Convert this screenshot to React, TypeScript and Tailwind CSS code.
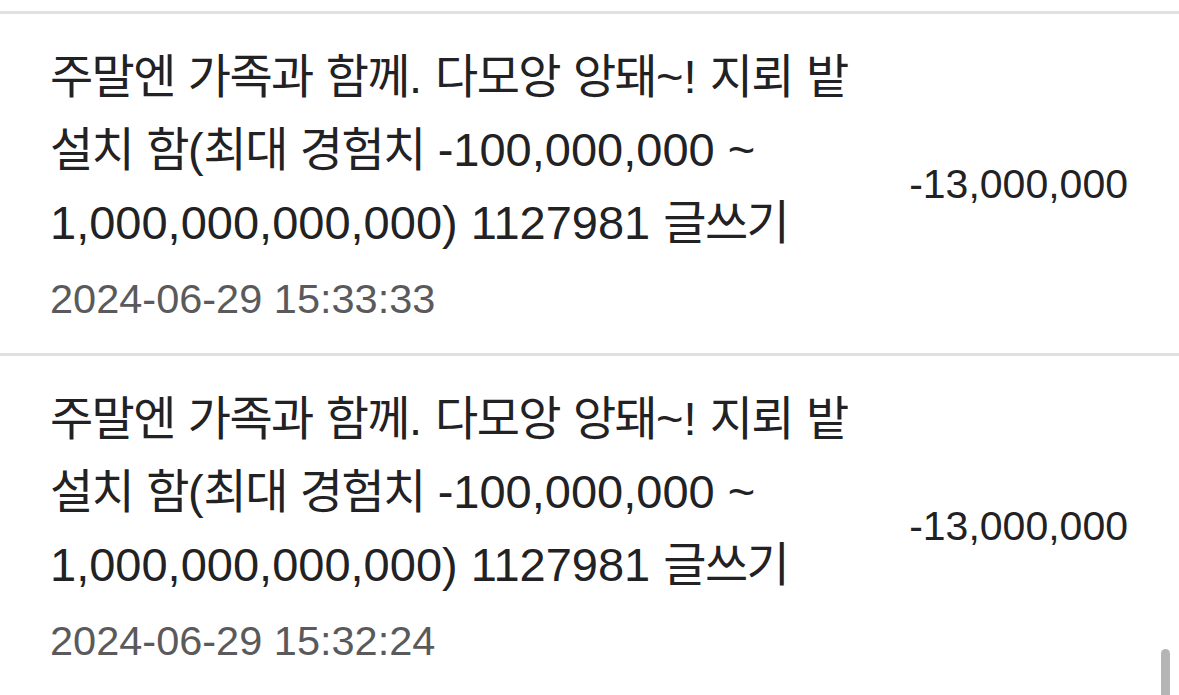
const items = [
  {
    lines: [
      '주말엔 가족과 함께. 다모앙 앙돼~! 지뢰 밭',
      '설치 함(최대 경험치 -100,000,000 ~',
      '1,000,000,000,000) 1127981 글쓰기',
    ],
    date: '2024-06-29 15:33:33',
    amount: '-13,000,000',
  },
  {
    lines: [
      '주말엔 가족과 함께. 다모앙 앙돼~! 지뢰 밭',
      '설치 함(최대 경험치 -100,000,000 ~',
      '1,000,000,000,000) 1127981 글쓰기',
    ],
    date: '2024-06-29 15:32:24',
    amount: '-13,000,000',
  },
];

// Hangul runs get slightly tighter tracking
function Runs({ text }: { text: string }) {
  const parts = text.split(/([\uac00-\ud7a3]+)/);
  return (
    <>
      {parts.map((p, i) =>
        /[\uac00-\ud7a3]/.test(p) ? (
          <span key={i} className="tracking-[-0.035em]">
            {p}
          </span>
        ) : (
          <span key={i}>{p}</span>
        ),
      )}
    </>
  );
}

function HistoryRow({ lines, date, amount }: (typeof items)[number]) {
  return (
    <div className="border-t-[3px] border-[#e1e1e3] h-[342px] flex items-center justify-between pl-[50px] pr-[51px]">
      <div className="flex flex-col pt-[1px]">
        {lines.map((l) => (
          <div key={l} className="h-[73px] leading-[73px] text-[47px] text-[#222224] whitespace-nowrap">
            <Runs text={l} />
          </div>
        ))}
        <div className="mt-[15px] mb-[4px] h-[50px] leading-[50px] text-[41.5px] text-[#5a5a5c]">{date}</div>
      </div>
      <div className="text-[41px] text-[#222224] leading-[50px]">{amount}</div>
    </div>
  );
}

export default function App() {
  return (
    <div className="relative w-[1179px] h-[695px] overflow-hidden bg-white pt-[11px] font-['Liberation_Sans','Noto_Sans_CJK_KR',sans-serif]">
      {items.map((it) => (
        <HistoryRow key={it.date} {...it} />
      ))}
      {/* scroll indicator */}
      <div className="absolute left-[1161px] top-[649px] w-[9px] h-[60px] rounded-t-full bg-[#b5b5b5]" />
    </div>
  );
}
